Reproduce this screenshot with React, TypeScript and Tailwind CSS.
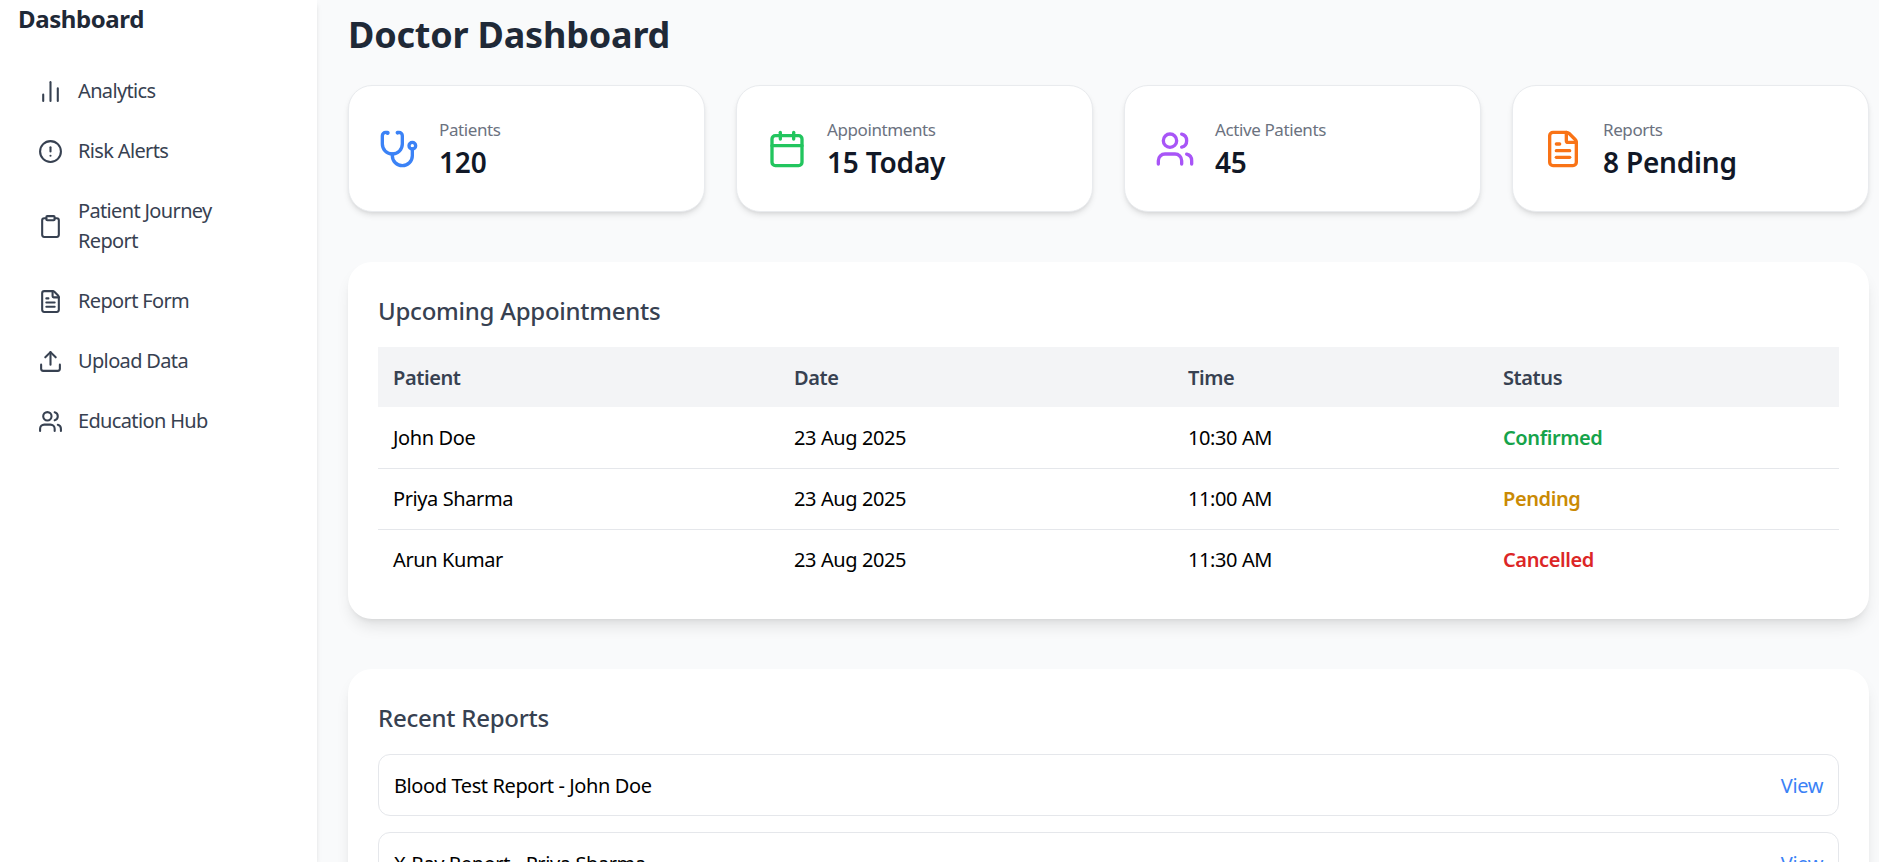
import React from 'react';
import {
  ChartNoAxesColumn,
  CircleAlert,
  Clipboard,
  FileText,
  Upload,
  Users,
  Calendar,
} from 'lucide-react';

// the stethoscope with the hooked ear tips, not the one in lucide
const Stethoscope: React.FC<{ size?: number; className?: string }> = ({ size = 24, className }) => (
  <svg
    width={size}
    height={size}
    viewBox="0 0 24 24"
    fill="none"
    stroke="currentColor"
    strokeWidth={2}
    strokeLinecap="round"
    strokeLinejoin="round"
    className={className}
  >
    <path d="M4.8 2.3A.3.3 0 1 0 5 2H4a2 2 0 0 0-2 2v5a6 6 0 0 0 6 6v0a6 6 0 0 0 6-6V4a2 2 0 0 0-2-2h-1a.2.2 0 1 0 .3.3" />
    <path d="M8 15v1a6 6 0 0 0 6 6v0a6 6 0 0 0 6-6v-4" />
    <circle cx="20" cy="10" r="2" />
  </svg>
);

const navItems = [
  { label: 'Analytics', icon: ChartNoAxesColumn },
  { label: 'Risk Alerts', icon: CircleAlert },
  { label: 'Patient Journey Report', icon: Clipboard },
  { label: 'Report Form', icon: FileText },
  { label: 'Upload Data', icon: Upload },
  { label: 'Education Hub', icon: Users },
];

const stats = [
  { label: 'Patients', value: '120', icon: Stethoscope, color: 'text-[#3b82f6]' },
  { label: 'Appointments', value: '15 Today', icon: Calendar, color: 'text-[#22c55e]' },
  { label: 'Active Patients', value: '45', icon: Users, color: 'text-[#a855f7]' },
  { label: 'Reports', value: '8 Pending', icon: FileText, color: 'text-[#f97316]' },
];

const appointments = [
  { patient: 'John Doe', date: '23 Aug 2025', time: '10:30 AM', status: 'Confirmed', color: 'text-[#16a34a]' },
  { patient: 'Priya Sharma', date: '23 Aug 2025', time: '11:00 AM', status: 'Pending', color: 'text-[#ca8a04]' },
  { patient: 'Arun Kumar', date: '23 Aug 2025', time: '11:30 AM', status: 'Cancelled', color: 'text-[#dc2626]' },
];

const reports = ['Blood Test Report - John Doe', 'X-Ray Report - Priya Sharma'];

export default function App() {
  return (
    <div className="flex h-[862px] overflow-hidden bg-[#f9fafb] font-['Noto_Sans',sans-serif] tracking-[-0.4px]">
      {/* Sidebar */}
      <aside className="w-[317px] shrink-0 bg-white shadow-md pl-[18px] pr-6">
        <h2 className="text-2xl font-bold text-[#1f2937] leading-9 mt-px">Dashboard</h2>
        <nav className="mt-6 flex flex-col">
          {navItems.map(item => {
            const Icon = item.icon;
            return (
              <div key={item.label} className="flex items-center gap-[15px] pl-5 py-[15px] pr-10 text-[#374151] text-[20px] leading-[30px] tracking-[-0.65px]">
                <Icon size={25} className="shrink-0" />
                <span>{item.label}</span>
              </div>
            );
          })}
        </nav>
      </aside>

      {/* Main */}
      <main className="w-[1552px] shrink-0 pl-[31px] pt-[9px]">
        <h1 className="text-4xl font-bold text-[#1f2937] leading-[52px] tracking-[-0.2px]">Doctor Dashboard</h1>

        <div className="mt-6 grid grid-cols-4 gap-[31px]">
          {stats.map(stat => {
            const Icon = stat.icon;
            return (
              <div key={stat.label} className="h-[127px] rounded-3xl border border-[#e9ebee] bg-white shadow-md flex items-center gap-5 px-[30px]">
                <Icon size={40} className={`shrink-0 ${stat.color}`} />
                <div className="pt-[2px]">
                  <p className="text-[17px] leading-[23px] text-[#6b7280]">{stat.label}</p>
                  <p className="mt-[2px] text-[28px] leading-[38px] font-semibold text-[#111827] tracking-[-0.2px]">{stat.value}</p>
                </div>
              </div>
            );
          })}
        </div>

        <section className="mt-[50px] h-[357px] rounded-3xl bg-white shadow-lg p-[30px]">
          <h3 className="text-2xl font-medium text-[#374151] leading-9 pt-px tracking-[-0.25px]">Upcoming Appointments</h3>
          <table className="mt-[18px] w-full table-fixed text-left text-[20px]">
            <thead className="bg-[#f3f4f6] text-[#374151]">
              <tr className="h-[60px]">
                <th className="w-[416px] pl-[15px] pt-[2px] font-semibold">Patient</th>
                <th className="w-[394px] pt-[2px] font-semibold">Date</th>
                <th className="w-[315px] pt-[2px] font-semibold">Time</th>
                <th className="pt-[2px] font-semibold">Status</th>
              </tr>
            </thead>
            <tbody className="text-black">
              {appointments.map((row, idx) => (
                <tr key={row.patient} className={`h-[61px] ${idx < appointments.length - 1 ? 'border-b border-[#e5e7eb]' : ''}`}>
                  <td className="pl-[15px] pt-px">{row.patient}</td>
                  <td className="pt-px">{row.date}</td>
                  <td className="pt-px">{row.time}</td>
                  <td className={`pt-px font-semibold ${row.color}`}>{row.status}</td>
                </tr>
              ))}
            </tbody>
          </table>
        </section>

        <section className="mt-[50px] rounded-3xl bg-white shadow-lg p-[30px]">
          <h3 className="text-2xl font-medium text-[#374151] leading-9 pt-px tracking-[-0.25px]">Recent Reports</h3>
          <div className="mt-[18px] flex flex-col gap-4">
            {reports.map(report => (
              <div key={report} className="h-[62px] rounded-xl border border-[#e5e7eb] flex items-center justify-between pl-[15px] pr-[15px] pt-[2px] text-[20px] text-black">
                <span>{report}</span>
                <span className="text-[#3b82f6]">View</span>
              </div>
            ))}
          </div>
        </section>
      </main>
    </div>
  );
}
